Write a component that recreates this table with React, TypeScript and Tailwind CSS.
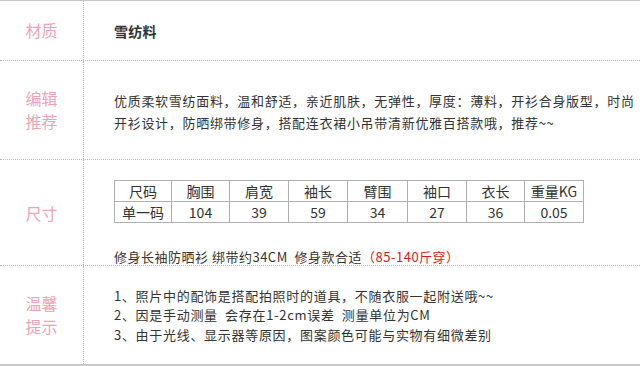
const cjk = { fontFamily: '"Noto Sans CJK SC", "Noto Sans", sans-serif' };

const heads = ['尺码', '胸围', '肩宽', '袖长', '臂围', '袖口', '衣长', '重量KG'];
const vals = ['单一码', '104', '39', '59', '34', '27', '36', '0.05'];
const widths = ['w-[57px]', 'w-[58px]', 'w-[59px]', 'w-[59px]', 'w-[60px]', 'w-[59px]', 'w-[58px]', 'w-[59px]'];

function Label({ lines }: { lines: string[] }) {
  return (
    <div className="flex flex-col items-center justify-center border-r border-dotted border-[#b8b8b8] text-[16px] leading-[23px] text-[#f0a3b6]">
      {lines.map((l) => (
        <div key={l}>{l}</div>
      ))}
    </div>
  );
}

export default function App() {
  return (
    <div className="h-[366px] w-[640px] bg-white text-[#333]" style={cjk}>
      <div className="border-t border-[#c4c4c4] border-b-2 border-b-[#c8c8c8]">
        {/* 材质 */}
        <div className="grid h-[60px] grid-cols-[84px_1fr] border-b border-dotted border-[#b8b8b8]">
          <Label lines={['材质']} />
          <div className="flex items-center pl-[30px] pt-[2px] text-[14px] font-bold tracking-[0.3px] text-[#333]">雪纺料</div>
        </div>

        {/* 编辑推荐 */}
        <div className="grid h-[99px] grid-cols-[84px_1fr] border-b border-dotted border-[#b8b8b8]">
          <Label lines={['编辑', '推荐']} />
          <div className="flex flex-col justify-center pl-[30px] pt-[4px] text-[13px] leading-[22px] tracking-[0.7px] whitespace-nowrap">
            <div>优质柔软雪纺面料，温和舒适，亲近肌肤，无弹性，厚度：薄料，开衫合身版型，时尚</div>
            <div>开衫设计，防晒绑带修身，搭配连衣裙小吊带清新优雅百搭款哦，推荐~~</div>
          </div>
        </div>

        {/* 尺寸 */}
        <div className="grid h-[106px] grid-cols-[84px_1fr] border-b border-dotted border-[#b8b8b8]">
          <Label lines={['尺寸']} />
          <div className="flex flex-col pl-[30px] pt-[20px]">
            <table className="w-[469px] table-fixed border-collapse text-[14px] leading-[20px]">
              <tbody>
                <tr>
                  {heads.map((h, i) => (
                    <td key={h} className={`${widths[i]} border border-[#b0b0b0] text-center`}>
                      {h}
                    </td>
                  ))}
                </tr>
                <tr>
                  {vals.map((v, i) => (
                    <td key={i} className="border border-[#b0b0b0] text-center">
                      {v}
                    </td>
                  ))}
                </tr>
              </tbody>
            </table>
            <div className="mt-[24px] text-[13px] leading-[20px] tracking-[0.5px] whitespace-nowrap">
              修身长袖防晒衫 绑带约34CM&nbsp; 修身款合适<span className="text-[#e01818]">（85-140斤穿）</span>
            </div>
          </div>
        </div>

        {/* 温馨提示 */}
        <div className="grid h-[98px] grid-cols-[84px_1fr]">
          <Label lines={['温馨', '提示']} />
          <div className="flex flex-col justify-center pl-[30px] text-[13px] leading-[19.5px] tracking-[0.7px] whitespace-nowrap">
            <div>1、照片中的配饰是搭配拍照时的道具，不随衣服一起附送哦~~</div>
            <div>2、因是手动测量&nbsp; 会存在1-2cm误差&nbsp; 测量单位为CM</div>
            <div>3、由于光线、显示器等原因，图案颜色可能与实物有细微差别</div>
          </div>
        </div>
      </div>
    </div>
  );
}
